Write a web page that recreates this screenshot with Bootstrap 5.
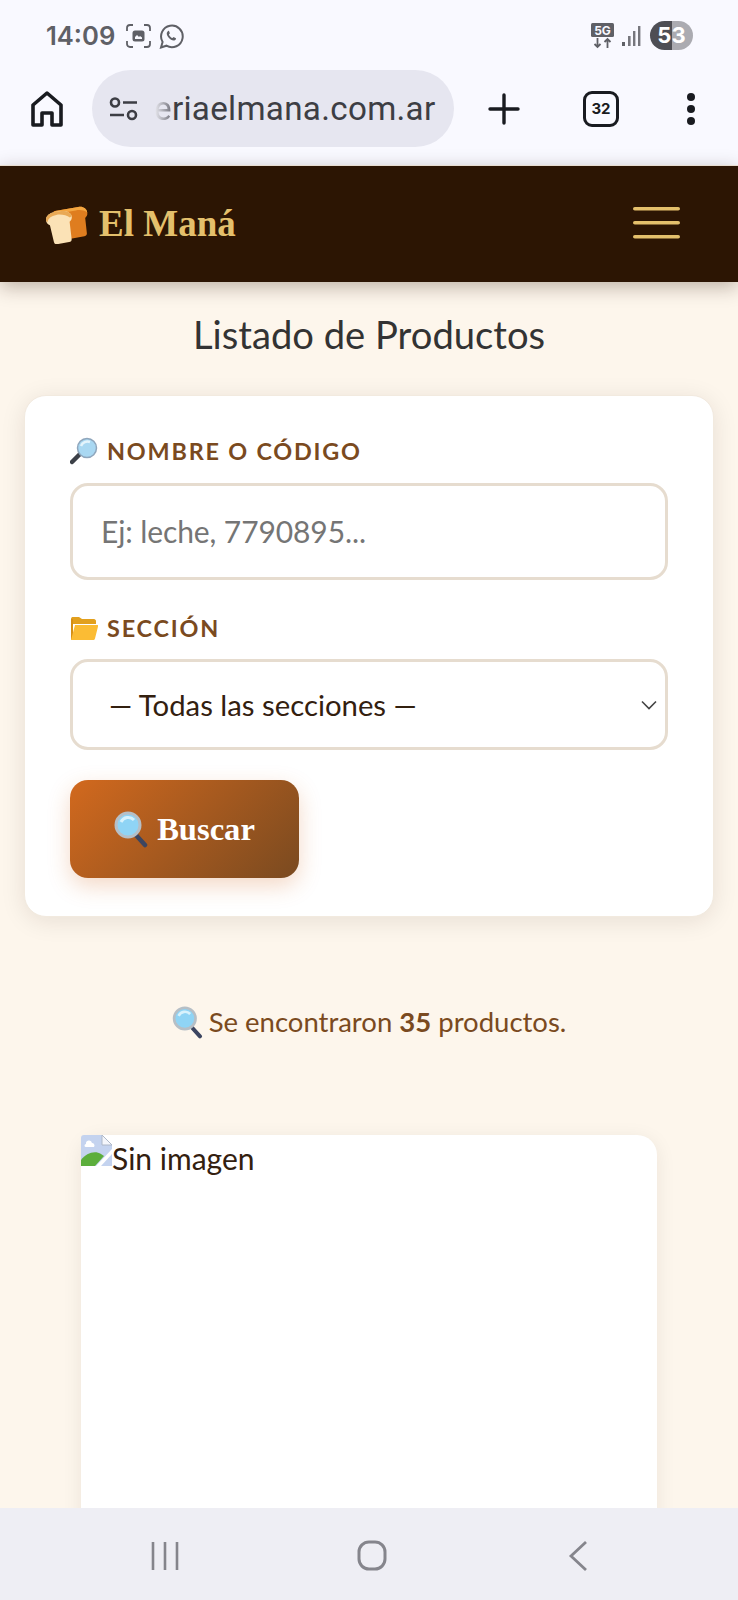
<!DOCTYPE html>
<html lang="es">
<head>
    <meta charset="UTF-8">
    <meta name="viewport" content="width=device-width, initial-scale=1.0">
    <title>El Maná - Listado de Productos</title>
    <link rel="stylesheet" href="https://cdn.jsdelivr.net/npm/bootstrap@5.3.2/dist/css/bootstrap.min.css">
    <style>
        html, body { height: 100%; }
        body {
            background-color: #fdf6ec;
            color: #2c1503;
            font-family: "Lato", "Liberation Sans", sans-serif;
            overflow: hidden;
        }
        .phone { height: 1600px; }

        /* android + chrome bars */
        .status-bar { height: 70px; background-color: #f9f9ff; padding: 21px 45px 0 46px; }
        .status-time { font-family: "Inter", "Roboto", sans-serif; font-weight: 600; font-size: 25.6px; line-height: 30px; color: #5f6066; }
        .status-shot { margin-left: 3px; }
        .battery-pill {
            width: 43px; height: 29px; border-radius: 15px;
            background: linear-gradient(90deg, #4e4e54 0 52%, #ababb1 52% 100%);
            color: #fff; font-family: "Inter", "Roboto", sans-serif; font-weight: 700; font-size: 22px; line-height: 29px; text-align: center;
        }
        .browser-bar { height: 95px; background-color: #f9f9ff; padding: 0 0 18px 31px; }
        .omnibox {
            width: 362px; height: 77px; margin-left: 29px; border-radius: 39px;
            background-color: #e6e6f0; padding-left: 17px;
            font-family: "Roboto", sans-serif; font-size: 33.2px; color: #3d3e44; letter-spacing: .3px;
            white-space: nowrap; overflow: hidden;
        }
        .url-fade { background: linear-gradient(90deg, #eeeef4, #70707a); -webkit-background-clip: text; background-clip: text; color: transparent; }
        .plus-icon { margin-left: 34px; }
        .tab-count {
            width: 36px; height: 36px; margin-left: 63px; border: 3.5px solid #191b20; border-radius: 9px;
            font-family: "Inter", "Roboto", sans-serif; font-weight: 700; font-size: 15px; color: #191b20; line-height: 1;
        }
        .more-icon { margin-left: 67px; }

        .shop-nav { height: 117px; background-color: #2c1503 !important; box-shadow: 0 5px 18px rgba(44,21,3,.3); padding: 0 58px 0 46px; z-index: 2; border-top: 1px solid #e8ddd0; }
        .shop-brand { font-family: "Liberation Serif", serif; font-weight: 700; font-size: 37px; color: #e4c06c !important; padding: 0; margin: 0; gap: 9px; }
        .shop-toggler { border: 0; padding: 0 0 2px; width: 47px; box-shadow: none !important; }

        .page-body { min-height: 0; overflow: hidden; padding: 0 24px; }
        .page-title { font-size: 38.2px; font-weight: 400; color: #333; line-height: 44px; margin: 30px 0 39px; }
        .search-card {
            border: 1px solid #f2eadf; border-radius: 22px; background: #fff;
            padding: 41px 45px 38px; box-shadow: 0 4px 24px rgba(44,21,3,.1);
        }
        .field-label { font-size: 23.4px; font-weight: 700; letter-spacing: 1.8px; color: #7a4a20; line-height: 28px; margin-bottom: 17.5px; gap: 9px; }
        .field-input {
            height: 97px; border: 3px solid #e6dccf; border-radius: 18px; padding: 0 28px;
            font-size: 30px; letter-spacing: -.1px; color: #2c1503; margin-bottom: 34px;
        }
        .field-input::placeholder { color: #757575; opacity: 1; }
        .field-select {
            height: 91px; border: 3px solid #e6dccf; border-radius: 18px; padding: 0 36px;
            font-size: 29.3px; color: #33200f; margin-bottom: 30px;
            background-image: url("data:image/svg+xml,%3csvg xmlns='http://www.w3.org/2000/svg' viewBox='0 0 16 10'%3e%3cpath fill='none' stroke='%23444' stroke-width='1.6' d='M1 1.5l7 7 7-7'/%3e%3c/svg%3e");
            background-size: 16px 10px; background-position: right 8px center;
        }
        .search-btn {
            width: 229px; height: 98px; border: 0; border-radius: 18px; color: #fff;
            background: linear-gradient(135deg, #d2691e, #7a4a20);
            box-shadow: 0 8px 22px rgba(210,105,30,.25);
            font-family: "Liberation Serif", serif; font-weight: 700; font-size: 32.6px; gap: 9px;
        }
        .result-line { font-size: 27.5px; color: #7a4a20; line-height: 34px; margin: 88px 0 96px; gap: 6px; }
        .product-tile {
            width: 576px; margin-left: 57px; height: 500px; border: 0;
            border-radius: 20px; background: #fff; box-shadow: 0 4px 20px rgba(44,21,3,.08);
            font-size: 30px; line-height: 36px; color: #33200f;
        }
        .alt-text { padding-top: 5px; }
        .nav-strip { height: 92px; background-color: #eeeef4; padding: 3px 150px 0 151px; z-index: 2; }
        .nav-home { margin-left: -3px; }
    </style>
</head>
<body>
    <div class="phone d-flex flex-column">
        <div class="status-bar flex-shrink-0 d-flex justify-content-between align-items-start">
            <div class="d-flex align-items-center gap-2">
                <span class="status-time">14:09</span>
                <svg width="25" height="24" viewBox="0 0 25 24" fill="none" stroke="#5f6066" stroke-width="1.8" class="status-shot"><path d="M1 7V4a3 3 0 0 1 3-3h3M18 1h3a3 3 0 0 1 3 3v3M24 17v3a3 3 0 0 1-3 3h-3M7 23H4a3 3 0 0 1-3-3v-3"/><rect x="6.500" y="6.500" width="12" height="11" rx="2.500" fill="#5f6066" stroke="none"/><path d="M9 13l2-2 2 2 1-1 2 1.500v1.500H9z" fill="#f9f9ff" stroke="none"/></svg>
                <svg width="25" height="25" viewBox="0 0 25 25" fill="none" stroke="#5f6066" stroke-width="2"><path d="M2 23.500l1.600-5.600A10.800 10.800 0 1 1 7.400 21.700z"/><path d="M8.600 7.500c-1.500 1.300-1 3.600.9 5.900 2 2.400 4.600 3.700 6.400 2.800 1-.5 1.300-1.500 1-2l-2.300-1.200-1.100 1.100c-1.400-.5-3-2.100-3.600-3.700l1-1.100-1-2.500c-.4-.2-.9 0-1.300.7z" fill="#5f6066" stroke="none"/></svg>
            </div>
            <div class="d-flex align-items-center">
                <svg width="23" height="26" viewBox="0 0 23 26"><rect x="0" y="0" width="23" height="14" rx="1.500" fill="#5f6066"/><text x="11.500" y="11.500" text-anchor="middle" font-family="Inter, Roboto, sans-serif" font-weight="700" font-size="12" fill="#f9f9ff">5G</text><path d="M6.500 15v9M3.500 21l3 3 3-3M16.500 25v-9M13.500 19l3-3 3 3" fill="none" stroke="#5f6066" stroke-width="1.800"/></svg>
                <svg width="20" height="22" viewBox="0 0 20 22" class="ms-2 me-2" fill="#5f6066"><rect x="0" y="17" width="3" height="4"/><rect x="6" y="11" width="2.600" height="10" fill="#77777d"/><rect x="11" y="6" width="2.400" height="15" fill="#77777d"/><rect x="16" y="1" width="2.400" height="20" fill="#77777d"/></svg>
                <div class="battery-pill">53</div>
            </div>
        </div>

        <div class="browser-bar flex-shrink-0 d-flex align-items-center">
            <svg width="32" height="36" viewBox="0 0 32 36" fill="none" stroke="#191b20" stroke-width="3.600" stroke-linejoin="round"><path d="M2 34V14L16 2l14 12v20h-9V22H11v12z"/></svg>
            <div class="omnibox d-flex align-items-center">
                <svg width="29" height="24" viewBox="0 0 29 24" fill="none" stroke="#3d3e44" stroke-width="2.600" class="flex-shrink-0 me-3"><circle cx="6" cy="5.500" r="4"/><path d="M14 5.500h14M1 18h14"/><circle cx="23" cy="18" r="4"/></svg>
                <span><span class="url-fade">e</span>riaelmana.com.ar</span>
            </div>
            <svg width="32" height="32" viewBox="0 0 32 32" stroke="#191b20" stroke-width="3.400" stroke-linecap="round" class="plus-icon"><path d="M16 2v28M2 16h28"/></svg>
            <div class="tab-count d-flex align-items-center justify-content-center">32</div>
            <svg width="10" height="32" viewBox="0 0 10 32" fill="#191b20" class="more-icon"><circle cx="5" cy="4" r="4"/><circle cx="5" cy="16" r="4"/><circle cx="5" cy="28" r="4"/></svg>
        </div>

        <nav class="navbar shop-nav flex-shrink-0 d-flex justify-content-between align-items-center">
            <a class="navbar-brand shop-brand d-flex align-items-center" href="#">
                <svg width="44" height="40" viewBox="0 0 44 40"><g transform="rotate(-10 22 20)"><path d="M10 5h25c5 0 8 3 8 7 0 3-2 4-3 5l-1 15c0 2-1 3-3 3H14z" fill="#df7d1f"/><path d="M10 5h25c5 0 8 3 8 7-3-3-7-4-11-4H14z" fill="#f4a641"/><path d="M11 6C5 6 1 9 1 13c0 2 1 4 3 5l1 17c0 2 1 3 3 3h12c2 0 3-1 3-3l1-17c2-1 3-3 3-5 0-4-5-7-11-7z" fill="#fbe2b6"/><path d="M11 6C5 6 1 9 1 13l1 2c1-4 5-6 10-6s10 2 13 5l2-1c0-4-5-7-11-7z" fill="#e9a955"/></g></svg>
                El Maná
            </a>
            <button class="navbar-toggler shop-toggler" type="button" aria-label="Menú">
                <svg width="47" height="34" viewBox="0 0 47 34" class="d-block" fill="#e4c06c"><rect x="0" y="1" width="47" height="3.600" rx="1.800"/><rect x="0" y="15" width="47" height="3.600" rx="1.800"/><rect x="0" y="29" width="47" height="3.600" rx="1.800"/></svg>
            </button>
        </nav>

        <main class="page-body flex-grow-1">
            <h1 class="page-title text-center">Listado de Productos</h1>
            <form class="card search-card" onsubmit="return false">
                <label class="field-label d-flex align-items-center text-uppercase" for="q">
                    <svg width="28" height="28" viewBox="0 0 28 28"><path d="M10 17L2 25" stroke="#3c4048" stroke-width="4.500" stroke-linecap="round"/><circle cx="17" cy="11" r="9.500" fill="#a9d8f2" stroke="#8fa6bc" stroke-width="1.500"/><path d="M11 9a7 7 0 0 1 9-4" stroke="#e4f4fc" stroke-width="2.500" fill="none"/></svg>
                    Nombre o código
                </label>
                <input id="q" type="text" class="form-control field-input shadow-none" placeholder="Ej: leche, 7790895...">
                <label class="field-label d-flex align-items-center text-uppercase" for="sec">
                    <svg width="28" height="26" viewBox="0 0 28 26"><path d="M1 4c0-1.500 1-2 2-2h6l3 2h12c1 0 2 1 2 2v3H1z" fill="#e2a01e"/><path d="M1 4h2v20l-2 1z" fill="#d68f14"/><path d="M5 10h22c1 0 1.500 .5 1 1.500l-3 12c-.3 1-1 1.500-2 1.500H1z" fill="#fbbc34"/></svg>
                    Sección
                </label>
                <select id="sec" class="form-select field-select shadow-none">
                    <option>— Todas las secciones —</option>
                </select>
                <button type="submit" class="btn search-btn d-flex align-items-center justify-content-center">
                    <svg width="34" height="37" viewBox="0 0 34 37"><path d="M21 23l10 11" stroke="#3c4560" stroke-width="4.500" stroke-linecap="round"/><circle cx="14" cy="14" r="12" fill="#8fd4f5" stroke="#b6bfc6" stroke-width="3"/><path d="M7 11a8 8 0 0 1 13-2" stroke="#d8f2fc" stroke-width="3" fill="none"/></svg>
                    Buscar
                </button>
            </form>
            <p class="result-line d-flex justify-content-center align-items-center">
                <svg width="31" height="33" viewBox="0 0 34 37"><path d="M21 23l10 11" stroke="#3c4560" stroke-width="4.500" stroke-linecap="round"/><circle cx="14" cy="14" r="12" fill="#8fd4f5" stroke="#b6bfc6" stroke-width="3"/><path d="M7 11a8 8 0 0 1 13-2" stroke="#d8f2fc" stroke-width="3" fill="none"/></svg>
                <span>Se encontraron <strong>35</strong> productos.</span>
            </p>
            <div class="card product-tile">
                <div class="d-flex align-items-start">
                    <svg width="31" height="31" viewBox="0 0 31 31" class="flex-shrink-0"><path d="M0 3q0-3 3-3h18l10 10v21H0z" fill="#c4d3ef"/><path d="M21 0v10h10z" fill="#f4f6fb" stroke="#aeb8c8"/><path d="M5 9a3 3 0 0 1 6-1 2.500 2.500 0 0 1 2 4H5a1.500 1.500 0 0 1 0-3z" fill="#fff"/><path d="M0 31v-6c5-7 14-10 20-6l3 2-9 10z" fill="#5cae3c"/><path d="M15 31l16-17v5L20 31z" fill="#fff"/></svg>
                    <span class="alt-text">Sin imagen</span>
                </div>
            </div>
        </main>

        <div class="nav-strip flex-shrink-0 d-flex justify-content-between align-items-center">
            <svg width="28" height="30" viewBox="0 0 28 30" stroke="#85858c" stroke-width="2.600"><path d="M2 1v28M14 1v28M26 1v28"/></svg>
            <svg width="30" height="31" viewBox="0 0 30 31" fill="none" stroke="#85858c" stroke-width="3" class="nav-home"><rect x="2" y="2" width="26" height="27" rx="10"/></svg>
            <svg width="20" height="32" viewBox="0 0 20 32" fill="none" stroke="#85858c" stroke-width="2.800"><path d="M18 2L3 16l15 14"/></svg>
        </div>
    </div>
    <script src="https://cdn.jsdelivr.net/npm/bootstrap@5.3.2/dist/js/bootstrap.bundle.min.js"></script>
</body>
</html>
